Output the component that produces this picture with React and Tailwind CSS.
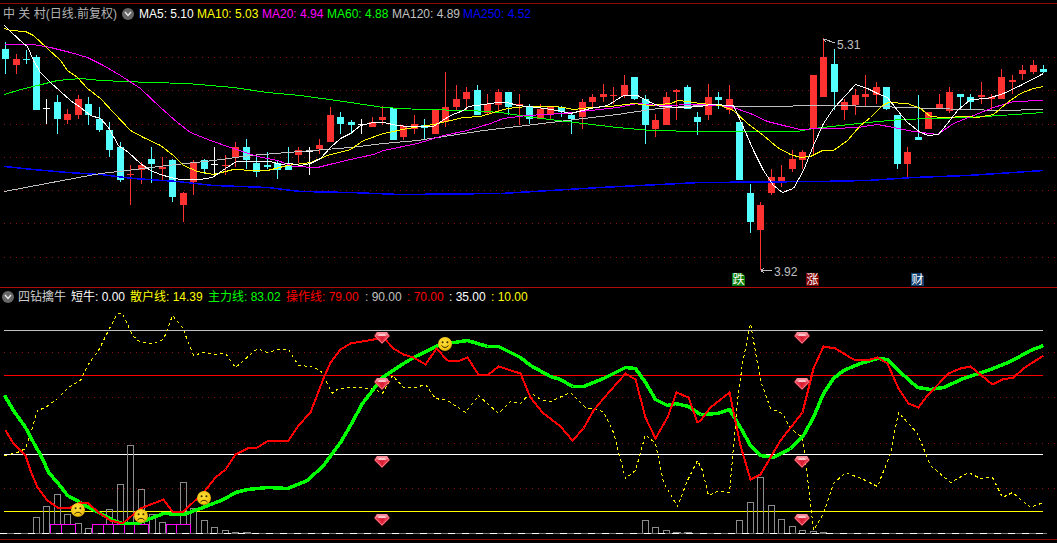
const CYAN = '#54ffff'
const RED = '#ff3232'
const WHITE = '#ffffff'

// x, body top, body bottom, wick top, wick bottom, colour
const candles = [
  [4.5, 49, 59, 42, 74, CYAN], [15.5, 59, 65, 54, 74, RED], [25.5, 59, 59, 50, 64, CYAN], [36, 57, 110, 55, 110, CYAN],
  [46, 108, 108, 99, 124, WHITE], [57, 102, 119, 95, 134, CYAN], [67, 114, 120, 109, 124, RED], [78, 99, 115, 95, 119, RED],
  [88, 104, 115, 97, 125, CYAN], [99, 119, 130, 107, 132, CYAN], [109, 130, 150, 122, 157, CYAN], [120, 147, 180, 142, 182, CYAN],
  [130, 174, 174, 165, 205, RED], [141, 165, 170, 162, 184, RED], [151, 159, 164, 147, 183, CYAN], [162, 167, 169, 157, 181, RED],
  [172, 160, 197, 159, 202, CYAN], [183, 193, 205, 192, 222, RED], [193, 163, 182, 160, 195, RED], [204, 160, 169, 159, 174, CYAN],
  [214, 164, 164, 147, 175, WHITE], [225, 165, 165, 155, 175, RED], [235, 147, 157, 142, 167, RED], [246, 147, 160, 139, 169, CYAN],
  [256, 163, 172, 154, 177, CYAN], [267, 165, 167, 152, 169, CYAN], [277, 163, 170, 160, 179, CYAN], [288, 165, 170, 147, 170, CYAN],
  [298, 150, 155, 147, 163, RED], [309, 151, 151, 147, 175, WHITE], [319, 145, 149, 139, 154, RED], [330, 115, 142, 107, 142, RED],
  [340, 117, 124, 112, 134, CYAN], [351, 122, 125, 120, 134, CYAN], [361, 124, 124, 119, 134, WHITE], [372, 122, 127, 117, 127, RED],
  [382, 117, 120, 106, 125, RED], [393, 108, 140, 108, 140, CYAN], [403, 126, 137, 125, 140, RED], [414, 124, 129, 115, 134, RED],
  [424, 125, 128, 119, 140, CYAN], [435, 110, 134, 110, 134, RED], [445, 107, 122, 72, 127, RED], [456, 99, 107, 85, 110, RED],
  [466, 92, 99, 87, 110, RED], [477, 90, 115, 85, 115, CYAN], [487, 104, 113, 94, 115, RED], [498, 92, 105, 89, 111, RED],
  [508, 92, 107, 92, 115, CYAN], [519, 104, 104, 94, 125, RED], [529, 106, 119, 104, 124, CYAN], [540, 109, 119, 104, 119, RED],
  [550, 107, 115, 107, 119, RED], [561, 107, 112, 106, 117, CYAN], [571, 115, 119, 113, 134, CYAN], [582, 102, 117, 99, 129, RED],
  [592, 97, 102, 94, 107, RED], [603, 94, 97, 84, 102, RED], [613, 95, 95, 87, 104, RED], [624, 85, 96, 75, 98, RED],
  [634, 77, 99, 77, 100, CYAN], [645, 99, 125, 95, 144, CYAN], [655, 120, 129, 114, 137, RED], [666, 97, 125, 92, 125, RED],
  [676, 90, 92, 89, 120, RED], [687, 87, 109, 85, 109, CYAN], [697, 117, 122, 112, 135, CYAN], [708, 97, 115, 84, 120, RED],
  [718, 97, 100, 92, 109, CYAN], [729, 99, 110, 85, 114, RED], [739, 122, 180, 122, 180, CYAN], [750, 193, 222, 184, 233, CYAN],
  [760, 205, 230, 202, 270, RED], [771, 177, 193, 169, 195, RED], [781, 177, 181, 165, 187, RED], [792, 159, 169, 150, 172, RED],
  [802, 152, 160, 150, 169, RED], [813, 75, 129, 75, 154, RED], [823, 57, 97, 38, 97, RED], [834, 64, 92, 49, 110, CYAN],
  [844, 102, 110, 99, 120, RED], [855, 95, 105, 89, 115, RED], [865, 94, 97, 75, 106, RED], [876, 87, 95, 82, 104, RED],
  [886, 87, 109, 87, 110, CYAN], [897, 115, 164, 115, 169, CYAN], [907, 152, 164, 147, 177, RED], [918, 137, 140, 95, 140, CYAN],
  [928, 112, 129, 112, 129, RED], [939, 104, 109, 94, 109, RED], [949, 92, 111, 87, 113, RED], [960, 94, 97, 94, 110, CYAN],
  [970, 97, 102, 94, 109, CYAN], [981, 95, 97, 82, 104, RED], [991, 97, 99, 94, 110, RED], [1001, 77, 99, 69, 99, RED],
  [1012, 80, 82, 75, 94, RED], [1022, 70, 74, 65, 80, RED], [1033, 65, 72, 60, 74, RED], [1043, 69, 72, 65, 73, CYAN],
]

const ma5 = '4,25 11,32 23,43 27,46 33,60 40,72 50,82 60,91 70,100 80,107 90,115 100,118 108,127 118,145 128,152 140,163 150,170 160,174 170,177 180,179 200,179 212,177 222,170 236,161 270,161 280,164 290,163 300,165 310,163 320,158 330,147 340,138 350,133 360,125 373,122 383,122 397,125 408,126 433,126 442,120 450,115 463,110 468,106 483,104 497,102 507,102 517,105 537,107 557,110 570,113 590,108 607,105 623,95 637,95 650,102 660,106 683,107 700,106 710,104 733,105 743,127 753,150 763,170 773,185 782,192 793,188 803,170 813,145 823,123 833,108 847,93 855,84 867,88 877,93 887,97 897,110 907,122 920,132 928,135 938,134 947,123 957,110 970,99 987,98 1003,93 1020,85 1043,73'
const ma10 = '4,28 10,30 25,31 33,35 47,48 60,60 67,70 77,77 87,88 100,98 113,112 130,130 143,137 160,145 173,155 183,165 197,171 213,174 233,169 253,170 267,170 287,165 310,162 327,155 350,149 363,140 383,133 407,128 433,124 450,120 463,117 480,116 493,112 507,108 527,106 553,106 563,107 573,109 590,107 610,106 633,103 650,105 670,103 678,100 687,101 700,103 720,105 733,110 747,123 763,135 777,147 790,154 800,157 810,156 822,150 833,150 847,140 860,125 870,117 882,105 888,102 907,103 920,108 930,116 943,117 967,116 977,117 993,114 1007,102 1020,93 1033,88 1043,86'
const ma20 = '4,44 33,44 50,47 70,52 87,57 103,65 120,75 140,88 160,107 177,122 190,132 210,140 230,147 257,156 277,160 293,166 317,167 333,163 350,159 373,154 383,150 417,143 443,135 467,130 490,123 503,118 527,115 563,113 590,110 617,107 637,103 657,105 700,104 730,106 750,113 767,121 787,126 800,129 817,128 833,128 857,127 877,124 893,127 913,131 937,134 953,123 973,115 993,107 1013,101 1043,100'
const ma60 = '4,94 20,89 37,85 57,80 80,78 100,80 150,82 187,83 233,87 267,92 300,95 350,102 383,107 420,109 470,110 500,112 533,117 557,120 583,123 617,127 650,130 700,131 750,131 797,131 813,128 840,125 867,122 900,119 933,118 967,117 1000,115 1043,112'
const ma120 = '4,191 62,180 100,173 127,170 167,165 213,160 250,155 287,152 350,147 383,143 417,140 450,135 483,130 517,126 550,122 583,118 617,114 650,109 670,107 700,105 753,106 833,105 877,106 933,108 1000,110 1043,109'
const ma250 = '4,166 33,169 67,172 100,174 133,178 177,181 213,185 267,187 300,191 350,192 400,194 500,193 600,187 700,182 817,181 867,180 913,177 967,175 1043,170'

const greenLine = '4,395 13,410 25,427 33,442 42,458 48,472 57,482 67,495 80,502 88,507 100,513 113,520 122,523 137,523 150,518 163,513 183,514 200,508 223,499 235,492 247,489 267,487 287,488 307,480 323,465 340,442 350,425 362,403 382,377 400,365 413,357 440,344 467,340 487,346 498,346 520,357 530,365 550,376 560,379 572,386 583,386 603,378 625,367 635,368 645,382 655,399 667,405 675,403 688,406 700,414 717,413 729,409 740,427 750,445 760,455 773,457 790,448 803,435 813,417 823,393 833,378 843,370 860,363 877,358 887,359 900,372 917,387 930,389 943,387 963,378 990,369 1010,361 1030,350 1043,345'
const redLine = '5,430 13,443 25,455 30,470 37,487 47,500 57,507 70,507 80,502 88,503 98,512 110,520 122,523 140,508 163,499 172,511 183,511 203,492 215,477 225,469 235,454 247,448 257,447 268,440 288,440 298,425 310,412 323,378 330,362 340,349 350,343 373,339 383,337 393,348 403,354 413,357 425,364 436,348 447,360 457,361 467,357 478,374 488,374 498,366 520,373 530,397 542,412 560,426 572,440 583,428 593,410 603,398 625,373 635,379 645,417 655,438 667,417 676,392 688,397 697,422 700,420 710,407 729,392 740,445 750,479 760,474 780,440 802,412 813,368 823,346 835,348 853,359 870,359 877,357 887,363 898,388 908,403 918,407 927,395 948,373 960,368 970,366 992,384 1002,379 1013,377 1023,368 1043,355'
const dashLine = '4,455 17,452 25,448 32,427 37,410 45,407 57,398 68,387 80,380 87,365 98,350 108,330 117,313 122,313 132,335 140,342 152,343 163,339 172,315 182,327 193,355 203,352 213,354 225,353 235,367 257,348 267,352 278,349 288,349 298,365 310,366 320,370 332,393 338,388 350,387 373,388 382,393 392,375 403,387 415,387 425,384 435,398 447,400 465,412 478,395 498,413 510,401 520,403 530,392 540,399 550,401 570,392 585,407 603,411 613,432 625,478 635,470 645,434 655,443 663,482 677,506 687,480 697,460 702,470 708,495 717,491 729,492 737,400 742,363 750,323 760,380 770,408 782,413 790,428 802,437 807,477 813,530 823,513 833,483 845,472 863,479 877,486 890,453 898,412 917,433 930,465 950,482 968,472 980,478 992,477 1002,497 1012,492 1030,507 1043,502'

// left, right, top
const bars = [
  [33, 39, 517], [43, 49, 506], [54, 60, 494], [64, 70, 514], [75, 81, 523], [85, 91, 528], [96, 102, 525], [106, 112, 509],
  [117, 123, 484], [127, 133, 445], [138, 144, 489], [149, 155, 514], [159, 165, 522], [170, 176, 524], [180, 186, 482],
  [190, 196, 508], [201, 207, 520], [211, 217, 527], [222, 228, 530], [232, 238, 532], [243, 250, 532],
  [642, 648, 520], [652, 658, 527], [663, 669, 530], [673, 680, 532], [684, 691, 532],
  [736, 742, 520], [747, 753, 502], [757, 763, 477], [768, 774, 505], [778, 784, 519], [789, 795, 526], [799, 805, 530], [810, 816, 531], [820, 826, 532],
]
const boxes = [[50, 60.5], [60.5, 75], [92, 103], [103, 113], [113, 124], [124, 134], [134, 148], [166, 176], [176, 190]]

function Dotted({ y }) {
  return <line x1="4" x2="1057" y1={y} y2={y} stroke="#8c0f0f" strokeDasharray="1 5" shapeRendering="crispEdges" />
}

// half pixel shift so 1px strokes land on whole pixel rows
function Line({ points, color, width = 1, dash }) {
  return <polyline points={points} transform="translate(0.5 0.5)" fill="none" stroke={color} strokeWidth={width} strokeDasharray={dash} shapeRendering="crispEdges" strokeLinejoin="round" />
}

function Candle({ x, top, bottom, wickTop, wickBottom, color }) {
  return (
    <g shapeRendering="crispEdges">
      <line x1={x + 0.5} x2={x + 0.5} y1={wickTop} y2={wickBottom} stroke={color} />
      {bottom - top < 1
        ? <line x1={x - 3} x2={x + 4} y1={top + 0.5} y2={top + 0.5} stroke={color} />
        : <rect x={x - 3} y={top} width="7" height={bottom - top} fill={color} />}
    </g>
  )
}

function Gem({ x, y }) {
  return (
    <g transform={`translate(${x - 8} ${y - 6})`}>
      <polygon points="3,0 13,0 16,4 8,12 0,4" fill="#e83a4e" />
      <polygon points="3,0 13,0 15,3.5 1,3.5" fill="#f58d98" />
      <polygon points="5,2 11,2 12,4 4,4" fill="#fbc4ca" />
      <polygon points="5,4.5 11,4.5 8,10" fill="#d81f36" />
      <polyline points="1,4 8,11 15,4" fill="none" stroke="#ff8b97" strokeWidth="0.7" />
    </g>
  )
}

function Face({ x, y, happy }) {
  return (
    <g transform={`translate(${x} ${y})`}>
      <circle r="7" fill="url(#faceGold)" />
      <circle cx="-2.4" cy="-1.8" r="1" fill="#3a2a00" />
      <circle cx="2.4" cy="-1.8" r="1" fill="#3a2a00" />
      <path d={happy ? 'M-3.5 1.5 Q0 5.5 3.5 1.5' : 'M-3.5 4 Q0 0.5 3.5 4'} fill="none" stroke="#3a2a00" strokeWidth="1" />
    </g>
  )
}

function Tag({ x, color, children }) {
  return (
    <g>
      <polygon points={`${x},273 ${x + 10},273 ${x + 13},276 ${x + 13},286 ${x},286`} fill={color} />
      <text x={x + 6.5} y="284" textAnchor="middle" fill="#ffffff" fontSize="12" fontFamily="'Noto Sans CJK SC', sans-serif">{children}</text>
    </g>
  )
}

function Toggle() {
  return (
    <span className="flex h-3 w-3 shrink-0 items-center justify-center rounded-full bg-[#666666]">
      <svg width="8" height="6" viewBox="0 0 8 6"><path d="M1 1 L4 4.5 L7 1" fill="none" stroke="#e8e8e8" strokeWidth="1.4" /></svg>
    </span>
  )
}

function MainChart() {
  return (
    <svg className="block h-[263px] w-[1057px]" viewBox="0 24 1057 263">
      {[57.5, 90.5, 124.5, 157.5, 190.5, 223.5, 257.5].map((y) => <Dotted key={y} y={y} />)}
      {candles.map(([x, top, bottom, wickTop, wickBottom, color]) => (
        <Candle key={x} x={x} top={top} bottom={bottom} wickTop={wickTop} wickBottom={wickBottom} color={color} />
      ))}
      <Line points={ma250} color="#0000ff" width={1.5} />
      <Line points={ma120} color="#c0c0c0" />
      <Line points={ma60} color="#00ff00" />
      <Line points={ma20} color="#ff00ff" />
      <Line points={ma10} color="#ffff00" />
      <Line points={ma5} color="#ffffff" />
      <path d="M823.5 39 L826 42 M824 39 L835 43" fill="none" stroke="#c0c0c0" shapeRendering="crispEdges" />
      <text x="837" y="49" fill="#c0c0c0" fontSize="12" fontFamily="'Liberation Sans', sans-serif">5.31</text>
      <path d="M761 270.5 L772 270.5 M761 270.5 L764 268 M761 270.5 L764 273" fill="none" stroke="#c0c0c0" shapeRendering="crispEdges" />
      <text x="774" y="276" fill="#c0c0c0" fontSize="12" fontFamily="'Liberation Sans', sans-serif">3.92</text>
      <Tag x={732} color="#0a7d0a">跌</Tag>
      <Tag x={806} color="#800000">涨</Tag>
      <Tag x={911} color="#123f6e">财</Tag>
    </svg>
  )
}

function IndicatorChart() {
  return (
    <svg className="block h-[231px] w-[1057px]" viewBox="0 308 1057 231">
      <defs>
        <radialGradient id="faceGold" cx="45%" cy="40%" r="65%">
          <stop offset="0%" stopColor="#ffe23a" />
          <stop offset="75%" stopColor="#f2c313" />
          <stop offset="100%" stopColor="#a87f08" />
        </radialGradient>
      </defs>
      {[352.5, 397.5, 443.5, 488.5].map((y) => <Dotted key={y} y={y} />)}
      <g shapeRendering="crispEdges">
        <line x1="4" x2="1043" y1="330.5" y2="330.5" stroke="#c0c0c0" />
        <line x1="4" x2="1043" y1="375.5" y2="375.5" stroke="#ff0000" />
        <line x1="4" x2="1043" y1="454.5" y2="454.5" stroke="#ffffff" />
        <line x1="4" x2="1043" y1="511.5" y2="511.5" stroke="#ffff00" />
        {bars.map(([left, right, top]) => (
          <rect key={left} x={left + 0.5} y={top + 0.5} width={right - left} height={533 - top} fill="none" stroke="#8c8c8c" />
        ))}
        {boxes.map(([left, right]) => (
          <rect key={left} x={left + 0.5} y="524.5" width={right - left} height="9" fill="#000000" stroke="#ff00ff" />
        ))}
        <line x1="0" x2="1047" y1="533.5" y2="533.5" stroke="#777777" />
        <line x1="0" x2="1047" y1="533.5" y2="533.5" stroke="#ffffff" strokeDasharray="7 7" />
      </g>
      <Line points={dashLine} color="#ffff00" dash="3 3" />
      <Line points={greenLine} color="#00ff00" width={3.5} />
      <Line points={redLine} color="#ff0000" width={2} />
      {[338, 384, 462, 520].map((y) => <Gem key={y} x={382} y={y} />)}
      {[338, 384, 462, 520].map((y) => <Gem key={y} x={802} y={y} />)}
      <Face x={78} y={510} />
      <Face x={141} y={516} />
      <Face x={204} y={498} />
      <Face x={445} y={344} happy />
    </svg>
  )
}

export default function App() {
  return (
    <div className="flex h-[543px] w-[1057px] flex-col overflow-hidden bg-black font-['Liberation_Sans','Noto_Sans_CJK_SC',sans-serif] text-[12px] leading-none">
      <div className="mt-[3px] flex h-[21px] items-center whitespace-nowrap border-t border-[#8f0a0a] pb-[1px]">
        <span className="ml-[3px] w-[119px] text-[#b4b4b4]">中 关 村(日线.前复权)</span>
        <Toggle />
        <span className="ml-[5px] w-[58px] text-white">MA5: 5.10</span>
        <span className="w-[65px] text-[#ffff00]">MA10: 5.03</span>
        <span className="w-[65px] text-[#ff00ff]">MA20: 4.94</span>
        <span className="w-[65px] text-[#00ff00]">MA60: 4.88</span>
        <span className="w-[71px] text-[#c0c0c0]">MA120: 4.89</span>
        <span className="text-[#0000ff]">MA250: 4.52</span>
      </div>
      <MainChart />
      <div className="flex h-[21px] items-center whitespace-nowrap border-t border-[#b00a0a] pb-[2px]">
        <span className="ml-[2px] mr-[4px]"><Toggle /></span>
        <span className="w-[53px] text-[#d0d0d0]">四钻擒牛</span>
        <span className="w-[59px] text-white">短牛: 0.00</span>
        <span className="w-[78px] text-[#ffff00]">散户线: 14.39</span>
        <span className="w-[78px] text-[#00ff00]">主力线: 83.02</span>
        <span className="w-[79px] text-[#ff0000]">操作线: 79.00</span>
        <span className="w-[42px] text-[#c0c0c0]">: 90.00</span>
        <span className="w-[42px] text-[#ff0000]">: 70.00</span>
        <span className="w-[42px] text-white">: 35.00</span>
        <span className="text-[#ffff00]">: 10.00</span>
      </div>
      <IndicatorChart />
      <div className="h-[1px] bg-[#8f0a0a]" />
    </div>
  )
}
